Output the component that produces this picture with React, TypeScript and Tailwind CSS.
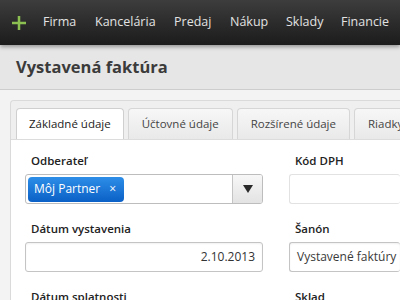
import React from "react";

// widths keep each menu item at its place in the bar
const navItems = [
  { label: "Firma", w: "w-[52px]" },
  { label: "Kancelária", w: "w-[79px]" },
  { label: "Predaj", w: "w-[56px]" },
  { label: "Nákup", w: "w-[56px]" },
  { label: "Sklady", w: "w-[55px]" },
  { label: "Financie", w: "w-[60px]" },
];
const tabs = ["Základné údaje", "Účtovné údaje", "Rozšírené údaje", "Riadky faktúry"];

function Label({ children }: { children: React.ReactNode }) {
  return (
    <div className="mb-[5px] h-4 whitespace-nowrap pl-[6px] text-[11.5px] leading-4 font-semibold text-[#222]">
      {children}
    </div>
  );
}

export default function App() {
  return (
    <div className="h-[300px] w-[400px] overflow-hidden bg-[#f3f3f3] font-['Open_Sans',sans-serif]">
      {/* Top bar */}
      <nav className="relative z-10 flex h-[45px] items-center overflow-hidden bg-gradient-to-b from-[#3d3d3d] to-[#1c1c1c] pl-[12px] shadow-[0_2px_4px_rgba(0,0,0,0.35)]">
        <svg width="14" height="14" viewBox="0 0 14 14" className="mr-[17px] shrink-0">
          <rect x="5.75" y="0" width="2.5" height="14" fill="#8cc152" />
          <rect x="0" y="5.75" width="14" height="2.5" fill="#8cc152" />
        </svg>
        <div className="flex text-[12.5px] text-[#e2e2e2]">
          {navItems.map((item) => (
            <span key={item.label} className={`shrink-0 whitespace-nowrap ${item.w}`}>
              {item.label}
            </span>
          ))}
        </div>
      </nav>

      {/* Page title */}
      <header className="flex h-[45px] items-center border-b border-[#cdcdcd] bg-[#e6e6e6] pl-[16px]">
        <h1 className="text-[16.5px] font-bold text-[#3b3b3b]">Vystavená faktúra</h1>
      </header>

      {/* Content */}
      <div className="pl-[10px] pt-[10px]">
        <div className="rounded-tl-[4px] border-l border-t border-[#dadada] bg-[#efefef]">
          <div className="flex gap-[4px] overflow-hidden pl-[5px] pt-[7px]">
            {tabs.map((tab, i) => (
              <div
                key={tab}
                className={
                  i === 0
                    ? "relative -mb-px flex h-[31px] shrink-0 items-center whitespace-nowrap rounded-t-[4px] border border-b-0 border-[#cfcfcf] bg-white px-[12px] text-[11.5px] text-[#222]"
                    : "flex h-[31px] shrink-0 items-center whitespace-nowrap rounded-t-[4px] border border-b-0 border-[#d6d6d6] bg-gradient-to-b from-[#f7f7f7] to-[#e9e9e9] px-[13px] text-[11.5px] text-[#444]"
                }
              >
                {tab}
              </div>
            ))}
          </div>

          <div className="grid grid-cols-[238px_1fr] gap-x-[26px] border-t border-[#dcdcdc] bg-white pl-[14px] pt-[13px]">
            {/* Row 1 */}
            <div className="mb-[17px]">
              <Label>Odberateľ</Label>
              <div className="flex h-[30px] items-stretch overflow-hidden rounded-[3px] border border-[#bdbdbd] bg-white">
                <div className="flex flex-1 items-center pl-[2px]">
                  <span className="flex h-[25px] items-center rounded-[4px] bg-gradient-to-b from-[#2d8ee8] to-[#0a60c6] pl-[6px] pr-[8px] text-[12px] text-white">
                    Môj Partner
                    <span className="ml-[9px] text-[12px] leading-none">×</span>
                  </span>
                </div>
                <div className="flex w-[30px] items-center justify-center border-l border-[#c4c4c4] bg-gradient-to-b from-[#f7f7f7] to-[#e3e3e3]">
                  <svg width="10" height="8" viewBox="0 0 10 8">
                    <path d="M0 0 H10 L5 8 Z" fill="#2a2a2a" />
                  </svg>
                </div>
              </div>
            </div>
            <div className="mb-[17px]">
              <Label>Kód DPH</Label>
              <div className="h-[30px] rounded-[3px] border border-r-0 border-[#e2e2e2] bg-white" />
            </div>

            {/* Row 2 */}
            <div className="mb-[17px]">
              <Label>Dátum vystavenia</Label>
              <div className="flex h-[30px] items-center justify-end rounded-[3px] border border-[#c4c4c4] bg-white pr-[7px] text-[12px] text-[#333] shadow-[inset_0_1px_2px_rgba(0,0,0,0.06)]">
                2.10.2013
              </div>
            </div>
            <div className="mb-[17px]">
              <Label>Šanón</Label>
              <div className="flex h-[30px] items-center whitespace-nowrap rounded-[3px] border border-r-0 border-[#c4c4c4] bg-white pl-[7px] text-[12px] text-[#3a3a3a] shadow-[inset_0_1px_2px_rgba(0,0,0,0.06)]">
                Vystavené faktúry
              </div>
            </div>

            {/* Row 3 */}
            <div>
              <Label>Dátum splatnosti</Label>
            </div>
            <div>
              <Label>Sklad</Label>
            </div>
          </div>
        </div>
      </div>
    </div>
  );
}
